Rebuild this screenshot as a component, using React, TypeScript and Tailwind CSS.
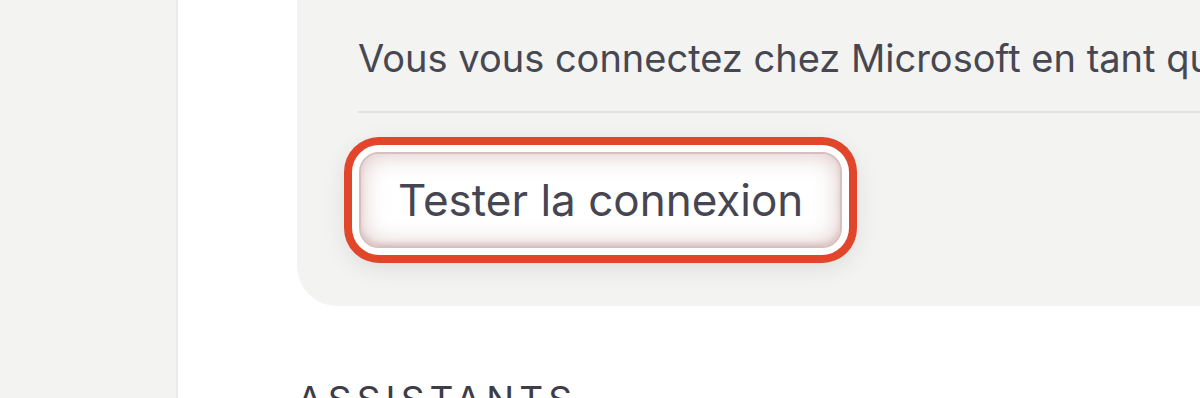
export default function App() {
  return (
    <div
      className="flex h-[398px] w-[1200px] overflow-hidden bg-white"
      style={{ fontFamily: "Inter, 'Noto Sans', sans-serif" }}
    >
      {/* Sidebar */}
      <aside className="h-full w-[178px] shrink-0 border-r-2 border-[#e9e9e7] bg-[#f3f3f1]" />

      {/* Main */}
      <main className="min-w-0 flex-1 pl-[119px]">
        <section className="w-[1100px] rounded-bl-[40px] bg-[#f3f3f1] pb-[58px] pl-[61px] pt-[31px]">
          <p className="whitespace-nowrap text-[38px] leading-[54px] text-[#474752]">
            Vous vous connectez chez Microsoft en tant que compte professionnel
          </p>
          <div className="mt-[26px] h-[2px] bg-[#e2e2e0]" />
          <div className="mt-[39px] pl-px">
            <button
              type="button"
              className="h-[96px] rounded-[20px] border-2 border-[#d6c0be] bg-white px-[37px] text-[44px] leading-none text-[#464652] shadow-[0_0_0_7px_#ffffff,0_0_0_15px_#e1452a,0_6px_26px_12px_rgba(0,0,0,0.11),inset_0_0_24px_rgba(196,156,154,0.6),inset_0_-3px_4px_rgba(170,130,128,0.3)]"
            >
              Tester la connexion
            </button>
          </div>
        </section>

        <h2 className="mt-[67px] whitespace-nowrap text-[37px] uppercase leading-[54px] tracking-[0.14em] text-[#3d3d47]">
          Assistants
        </h2>
      </main>
    </div>
  );
}
